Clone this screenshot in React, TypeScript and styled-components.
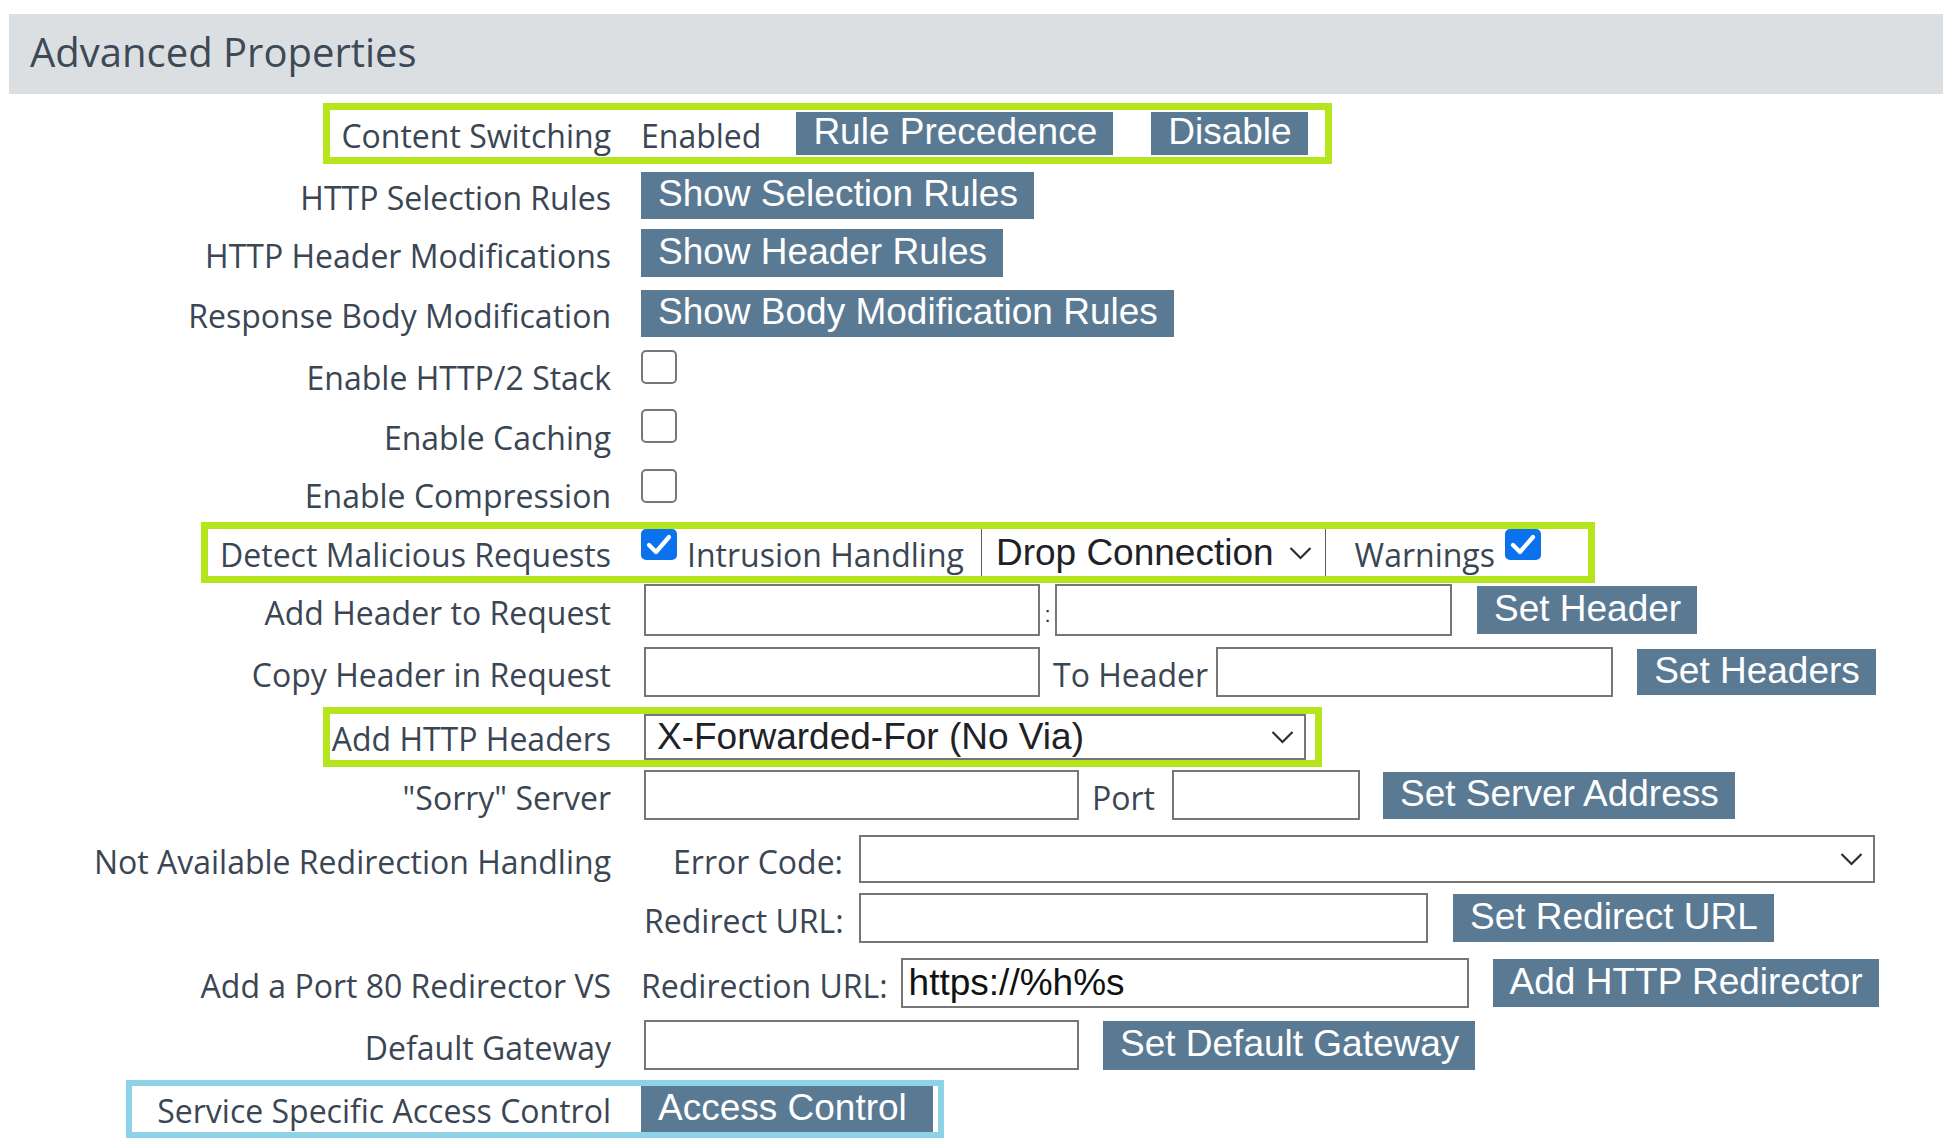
import React from "react";
import styled, { createGlobalStyle, css } from "styled-components";

const GREEN = "#b5e61d";
const BLUE = "#8dd2e6";
const BTN = "#5a7a94";
const LABEL = "#3a4653";

const Global = createGlobalStyle`
  html, body { margin: 0; padding: 0; background: #ffffff; }
  body { font-family: "Open Sans", "Noto Sans", sans-serif; }
`;

const Page = styled.div`
  width: 1956px;
  height: 1148px;
  box-sizing: border-box;
  padding: 14px 13px 0 9px;
  overflow: hidden;
  background: #fff;
`;

const Header = styled.div`
  height: 80px;
  background: #dcdfe2;
  display: flex;
  align-items: center;
  padding: 0 0 6px 21px;
  box-sizing: border-box;
`;

const Title = styled.h1`
  margin: 0;
  font-family: "Open Sans", "Noto Sans", sans-serif;
  font-weight: 400;
  font-size: 40px;
  color: #3d4957;
`;

const Row = styled.div<{ $mt: number; $h: number }>`
  display: grid;
  grid-template-columns: 602px auto;
  justify-content: start;
  align-items: center;
  height: ${(p) => p.$h}px;
  margin-top: ${(p) => p.$mt}px;
`;

const LabelCell = styled.div<{ $hl?: string; $w?: number; $bw?: number }>`
  justify-self: end;
  display: flex;
  align-items: center;
  justify-content: flex-end;
  box-sizing: border-box;
  font-family: "Open Sans", "Noto Sans", sans-serif;
  font-size: 32px;
  color: ${LABEL};
  white-space: nowrap;
  padding-top: 5px;
  ${(p) =>
    p.$hl &&
    css`
      align-self: stretch;
      width: ${p.$w}px;
      padding-top: 3px;
      border: ${p.$bw ?? 7}px solid ${p.$hl};
      border-right: 0;
    `}
`;

const Controls = styled.div<{ $hl?: string; $w?: number; $bw?: number }>`
  display: flex;
  align-items: center;
  box-sizing: border-box;
  padding-left: 30px;
  align-self: stretch;
  ${(p) =>
    p.$hl &&
    css`
      width: ${p.$w}px;
      border: ${p.$bw ?? 7}px solid ${p.$hl};
      border-left: 0;
    `}
`;

const Btn = styled.button<{ $h?: number; $ml?: number; $pr?: number }>`
  height: ${(p) => p.$h ?? 47}px;
  margin-left: ${(p) => p.$ml ?? 0}px;
  padding: 0 ${(p) => p.$pr ?? 16}px 3px 17px;
  border: 0;
  border-radius: 0;
  background: ${BTN};
  color: #ffffff;
  font-family: "Liberation Sans", Arial, sans-serif;
  font-size: 37px;
  white-space: nowrap;
  display: inline-flex;
  align-items: center;
  flex: none;
  cursor: pointer;
`;

const Text = styled.span<{ $ml?: number; $w?: number }>`
  font-family: "Open Sans", "Noto Sans", sans-serif;
  font-size: 32px;
  color: ${LABEL};
  white-space: nowrap;
  margin-left: ${(p) => p.$ml ?? 0}px;
  padding-top: 4px;
  flex: none;
  ${(p) =>
    p.$w &&
    css`
      width: ${p.$w}px;
      text-align: right;
    `}
`;

const Box = styled.span<{ $checked?: boolean; $ml?: number }>`
  display: inline-flex;
  align-items: center;
  justify-content: center;
  box-sizing: border-box;
  flex: none;
  align-self: flex-start;
  width: 36px;
  height: ${(p) => (p.$checked ? 31 : 34)}px;
  margin-left: ${(p) => p.$ml ?? 0}px;
  border-radius: 5px;
  border: ${(p) => (p.$checked ? "none" : "2.5px solid #787878")};
  background: ${(p) => (p.$checked ? "#0b72ee" : "#ffffff")};
`;

const Field = styled.input<{ $w: number; $ml?: number }>`
  width: ${(p) => p.$w}px;
  align-self: stretch;
  margin: 0 0 0 ${(p) => p.$ml ?? 0}px;
  box-sizing: border-box;
  border: 2px solid #767676;
  border-radius: 0;
  background: #ffffff;
  padding: 0 6px;
  font-family: "Liberation Sans", Arial, sans-serif;
  font-size: 37px;
  color: #111111;
  outline: none;
  flex: none;
`;

const Select = styled.div<{ $w: number; $ml?: number }>`
  width: ${(p) => p.$w}px;
  align-self: stretch;
  margin-left: ${(p) => p.$ml ?? 0}px;
  box-sizing: border-box;
  border: 2px solid #767676;
  background: #ffffff;
  display: flex;
  align-items: center;
  justify-content: space-between;
  padding: 0 10px 0 11px;
  font-family: "Liberation Sans", Arial, sans-serif;
  font-size: 37px;
  color: #1e2226;
  white-space: nowrap;
  flex: none;
`;

const InlineSelect = styled.div<{ $ml?: number }>`
  align-self: stretch;
  margin-left: ${(p) => p.$ml ?? 0}px;
  display: flex;
  align-items: center;
  gap: 15px;
  padding: 0 13px 0 14px;
  border-left: 1.5px solid #5d5d5d;
  border-right: 1.5px solid #5d5d5d;
  font-family: "Liberation Sans", Arial, sans-serif;
  font-size: 37px;
  color: #1e2226;
  white-space: nowrap;
  flex: none;
`;

const Colon = styled.span`
  width: 15px;
  text-align: center;
  font-family: "Liberation Sans", Arial, sans-serif;
  font-size: 22px;
  color: #333;
  padding-top: 10px;
  flex: none;
`;

const Chevron = () => (
  <svg width="23" height="14" viewBox="0 0 23 14" fill="none">
    <polyline points="1.5,2 11.5,12 21.5,2" stroke="#2b2f33" strokeWidth="2.2" />
  </svg>
);

const Tick = () => (
  <svg width="26" height="22" viewBox="0 0 26 22" fill="none">
    <polyline points="3,11 10,18 23,3" stroke="#ffffff" strokeWidth="4.2" strokeLinecap="round" strokeLinejoin="round" />
  </svg>
);

const Check = ({ checked, ml }: { checked?: boolean; ml?: number }) => (
  <Box $checked={checked} $ml={ml}>
    {checked && <Tick />}
  </Box>
);

export default function App() {
  return (
    <>
      <Global />
      <Page>
        <Header>
          <Title>Advanced Properties</Title>
        </Header>

        <Row $mt={9} $h={58}>
          <LabelCell $hl={GREEN} $w={288}>Content Switching</LabelCell>
          <Controls $hl={GREEN} $w={721}>
            <Text>Enabled</Text>
            <Btn $h={43} $ml={35}>Rule Precedence</Btn>
            <Btn $h={43} $ml={38}>Disable</Btn>
          </Controls>
        </Row>

        <Row $mt={10} $h={47}>
          <LabelCell>HTTP Selection Rules</LabelCell>
          <Controls>
            <Btn>Show Selection Rules</Btn>
          </Controls>
        </Row>

        <Row $mt={11} $h={48}>
          <LabelCell>HTTP Header Modifications</LabelCell>
          <Controls>
            <Btn $h={48}>Show Header Rules</Btn>
          </Controls>
        </Row>

        <Row $mt={12} $h={47}>
          <LabelCell>Response Body Modification</LabelCell>
          <Controls>
            <Btn>Show Body Modification Rules</Btn>
          </Controls>
        </Row>

        <Row $mt={14} $h={50}>
          <LabelCell>Enable HTTP/2 Stack</LabelCell>
          <Controls>
            <Check />
          </Controls>
        </Row>

        <Row $mt={9} $h={52}>
          <LabelCell>Enable Caching</LabelCell>
          <Controls>
            <Check />
          </Controls>
        </Row>

        <Row $mt={8} $h={48}>
          <LabelCell>Enable Compression</LabelCell>
          <Controls>
            <Check />
          </Controls>
        </Row>

        <Row $mt={5} $h={57}>
          <LabelCell $hl={GREEN} $w={410}>Detect Malicious Requests</LabelCell>
          <Controls $hl={GREEN} $w={984}>
            <Check checked />
            <Text $ml={10}>Intrusion Handling</Text>
            <InlineSelect $ml={17}>
              <span>Drop Connection</span>
              <Chevron />
            </InlineSelect>
            <Text $ml={29}>Warnings</Text>
            <Check checked ml={10} />
          </Controls>
        </Row>

        <Row $mt={5} $h={52}>
          <LabelCell>Add Header to Request</LabelCell>
          <Controls>
            <Field $w={396} $ml={3} />
            <Colon>:</Colon>
            <Field $w={397} />
            <Btn $h={48} $ml={25}>Set Header</Btn>
          </Controls>
        </Row>

        <Row $mt={11} $h={50}>
          <LabelCell>Copy Header in Request</LabelCell>
          <Controls>
            <Field $w={396} $ml={3} />
            <Text $ml={13}>To Header</Text>
            <Field $w={397} $ml={8} />
            <Btn $h={46} $ml={24}>Set Headers</Btn>
          </Controls>
        </Row>

        <Row $mt={10} $h={55}>
          <LabelCell $hl={GREEN} $w={288}>Add HTTP Headers</LabelCell>
          <Controls $hl={GREEN} $w={711}>
            <Select $w={662} $ml={3}>
              <span>X-Forwarded-For (No Via)</span>
              <Chevron />
            </Select>
          </Controls>
        </Row>

        <Row $mt={8} $h={50}>
          <LabelCell>"Sorry" Server</LabelCell>
          <Controls>
            <Field $w={435} $ml={3} />
            <Text $ml={13}>Port</Text>
            <Field $w={188} $ml={17} />
            <Btn $ml={23}>Set Server Address</Btn>
          </Controls>
        </Row>

        <Row $mt={15} $h={46}>
          <LabelCell>Not Available Redirection Handling</LabelCell>
          <Controls>
            <Text $w={199} $ml={3}>Error Code:</Text>
            <Select $w={1016} $ml={16}>
              <span />
              <Chevron />
            </Select>
          </Controls>
        </Row>

        <Row $mt={12} $h={50}>
          <LabelCell />
          <Controls>
            <Text $w={199} $ml={3}>Redirect URL:</Text>
            <Field $w={569} $ml={16} />
            <Btn $h={48} $ml={25}>Set Redirect URL</Btn>
          </Controls>
        </Row>

        <Row $mt={15} $h={50}>
          <LabelCell>Add a Port 80 Redirector VS</LabelCell>
          <Controls>
            <Text>Redirection URL:</Text>
            <Field $w={568} $ml={13} defaultValue="https://%h%s" />
            <Btn $h={48} $ml={24}>Add HTTP Redirector</Btn>
          </Controls>
        </Row>

        <Row $mt={12} $h={50}>
          <LabelCell>Default Gateway</LabelCell>
          <Controls>
            <Field $w={435} $ml={3} />
            <Btn $h={49} $ml={24}>Set Default Gateway</Btn>
          </Controls>
        </Row>

        <Row $mt={10} $h={58}>
          <LabelCell $hl={BLUE} $w={485} $bw={6}>Service Specific Access Control</LabelCell>
          <Controls $hl={BLUE} $w={333} $bw={6}>
            <Btn $h={46} $pr={26}>Access Control</Btn>
          </Controls>
        </Row>
      </Page>
    </>
  );
}
